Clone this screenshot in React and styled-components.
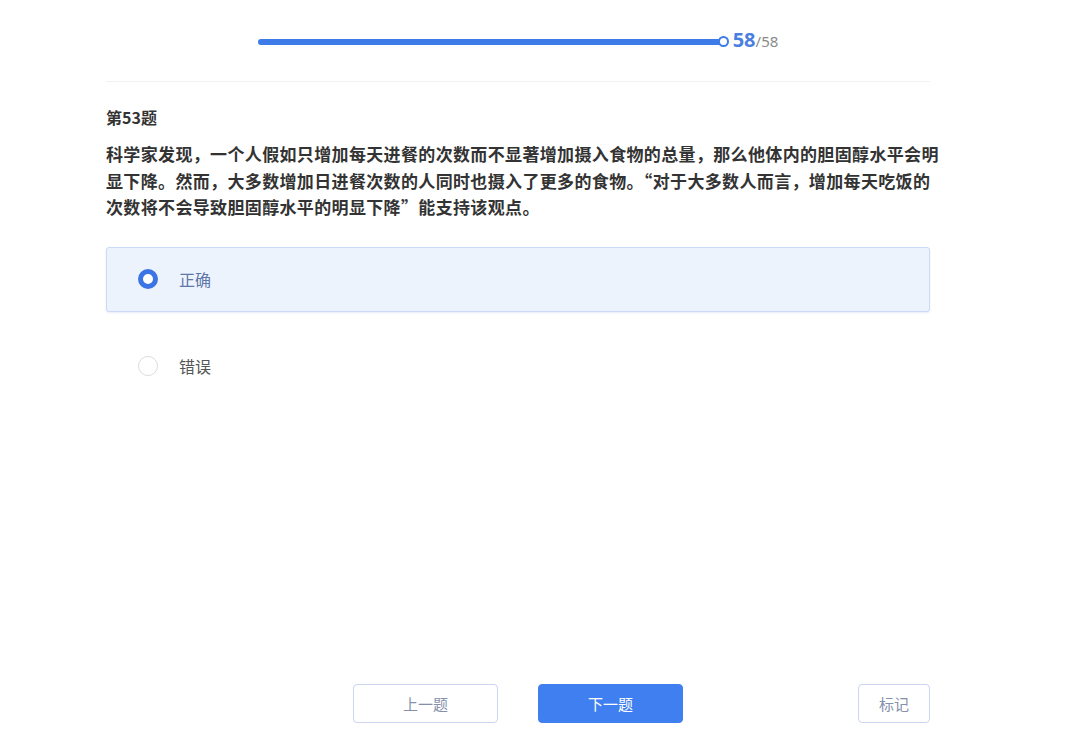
import React from "react";
import styled, { createGlobalStyle } from "styled-components";

const GlobalStyle = createGlobalStyle`
    html, body {
        margin: 0;
        padding: 0;
        background: #fff;
    }
    body {
        font-family: "Noto Sans CJK SC", "Noto Sans", sans-serif;
        color: #333;
    }
`;

const Page = styled.div`
    min-height: 100vh;
    box-sizing: border-box;
    display: flex;
    flex-direction: column;
    padding: 0 0 14px 106px;
`;

const Column = styled.div`
    width: 824px;
    flex: 1;
    display: flex;
    flex-direction: column;
`;

const ProgressRow = styled.div`
    height: 82px;
    display: flex;
    align-items: center;
    justify-content: center;
    gap: 9px;
    padding-top: 2px;
    box-sizing: border-box;
    border-bottom: 1px solid #f1f1f1;
`;

const Track = styled.div`
    position: relative;
    width: 466px;
    height: 6px;
    border-radius: 3px;
    background: #e8eefb;
`;

const Fill = styled.div`
    height: 100%;
    border-radius: 3px;
    background: #3d7be8;
`;

const Knob = styled.span`
    position: absolute;
    right: -5px;
    top: 50%;
    width: 7px;
    height: 7px;
    margin-top: -5.5px;
    border: 2px solid #3d7be8;
    border-radius: 50%;
    background: #fff;
`;

const Count = styled.div`
    display: flex;
    align-items: baseline;
    font-family: "Noto Sans", "Noto Sans CJK SC", sans-serif;
    margin-top: -4px;
`;

const Current = styled.span`
    font-size: 20px;
    font-weight: 700;
    color: #4a7fe0;
`;

const Total = styled.span`
    font-size: 15px;
    color: #8a8a8a;
`;

const Title = styled.h3`
    margin: 24px 0 0;
    font-size: 16px;
    line-height: 22px;
    font-weight: 700;
    color: #333;
`;

const Question = styled.p`
    margin: 13px 0 0;
    width: 836px;
    font-size: 17px;
    letter-spacing: 0.35px;
    line-height: 26.5px;
    font-weight: 700;
    color: #333;
`;

const Options = styled.div`
    margin-top: 26px;
    display: flex;
    flex-direction: column;
    gap: 22px;
`;

const Option = styled.label`
    height: 65px;
    box-sizing: border-box;
    display: flex;
    align-items: center;
    gap: 21px;
    padding-left: 31px;
    border-radius: 3px;
    border: 1px solid ${(p) => (p.$active ? "#cbdaf6" : "transparent")};
    background: ${(p) => (p.$active ? "#edf3fd" : "transparent")};
    box-shadow: ${(p) => (p.$active ? "0 1px 2px rgba(60, 100, 200, 0.12)" : "none")};
    cursor: pointer;
`;

const Radio = styled.span`
    width: 20px;
    height: 20px;
    box-sizing: border-box;
    border-radius: 50%;
    background: #fff;
    border: ${(p) => (p.$checked ? "5px solid #3b74e4" : "1px solid #dcdcdc")};
`;

const OptionText = styled.span`
    font-size: 16px;
    color: ${(p) => (p.$active ? "#5f76a8" : "#555")};
`;

const Footer = styled.div`
    margin-top: auto;
    display: flex;
    align-items: center;
    padding-left: 247px;
    gap: 40px;
`;

const Button = styled.button`
    width: ${(p) => p.$width || 145}px;
    height: 39px;
    border-radius: 4px;
    font-family: inherit;
    font-size: 15px;
    cursor: pointer;
    border: 1px solid ${(p) => (p.$primary ? "#3f7ff0" : "#cbd5f0")};
    background: ${(p) => (p.$primary ? "#3f7ff0" : "#fff")};
    color: ${(p) => (p.$primary ? "#fff" : "#8790ab")};
`;

const Spacer = styled.div`
    flex: 1;
`;

const options = [
    { key: "a", text: "正确" },
    { key: "b", text: "错误" },
];

export default function App() {
    const [selected, setSelected] = React.useState("a");
    const done = 58;
    const total = 58;

    return (
        <Page>
            <GlobalStyle />
            <Column>
                <ProgressRow>
                    <Track>
                        <Fill style={{ width: `${(done / total) * 100}%` }} />
                        <Knob />
                    </Track>
                    <Count>
                        <Current>{done}</Current>
                        <Total>/{total}</Total>
                    </Count>
                </ProgressRow>

                <Title>第53题</Title>
                <Question>
                    科学家发现，一个人假如只增加每天进餐的次数而不显著增加摄入食物的总量，那么他体内的胆固醇水平会明显下降。然而，大多数增加日进餐次数的人同时也摄入了更多的食物。“对于大多数人而言，增加每天吃饭的次数将不会导致胆固醇水平的明显下降”能支持该观点。
                </Question>

                <Options>
                    {options.map((o) => (
                        <Option key={o.key} $active={selected === o.key} onClick={() => setSelected(o.key)}>
                            <Radio $checked={selected === o.key} />
                            <OptionText $active={selected === o.key}>{o.text}</OptionText>
                        </Option>
                    ))}
                </Options>

                <Footer>
                    <Button>上一题</Button>
                    <Button $primary>下一题</Button>
                    <Spacer />
                    <Button $width={72}>标记</Button>
                </Footer>
            </Column>
        </Page>
    );
}
